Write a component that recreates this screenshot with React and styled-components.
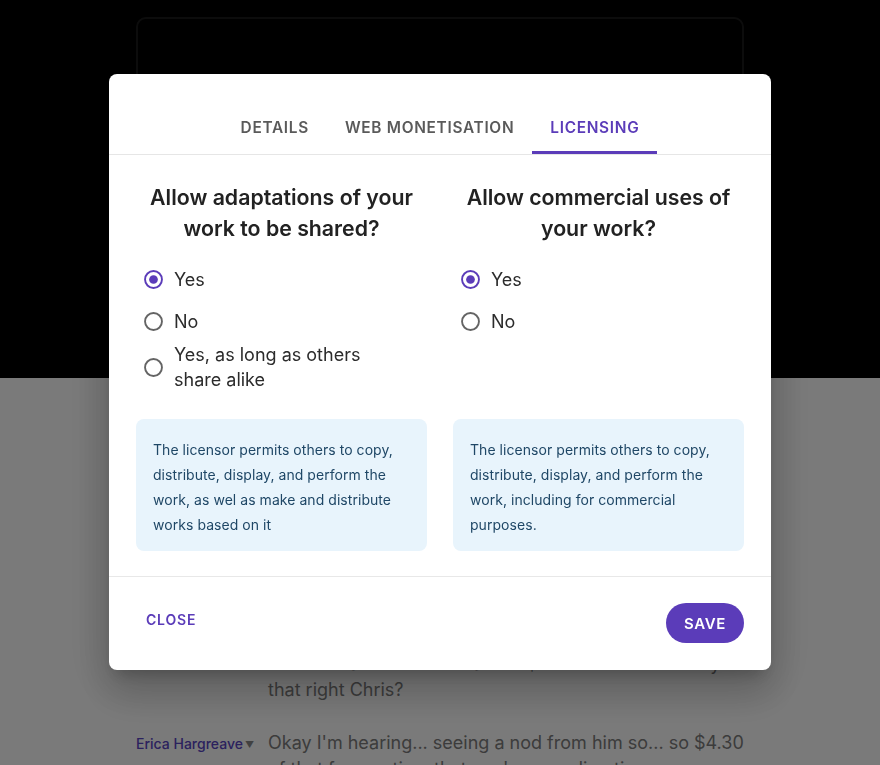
import React, { useState } from 'react'
import styled, { createGlobalStyle } from 'styled-components'

const purple = '#5b3cb9'

const GlobalStyle = createGlobalStyle`
  html, body {
    margin: 0;
    padding: 0;
    background: #fff;
    font-family: Inter, 'Noto Sans', sans-serif;
    overflow: hidden;
  }
`

const Page = styled.div`
  width: 880px;
  height: 765px;
  overflow: hidden;
`

const Hero = styled.div`
  height: 378px;
  background: #000;
  padding: 17px 136px 0;
  box-sizing: border-box;
`

const PlayerCard = styled.div`
  height: 400px;
  border: 2px solid #1b1b1b;
  border-radius: 10px;
`

const Transcript = styled.div`
  padding: 273px 136px 0;
  display: flex;
  flex-direction: column;
  gap: 27px;
`

const Entry = styled.div`
  display: grid;
  grid-template-columns: 132px 1fr;
`

const Speaker = styled.div`
  font-size: 14px;
  font-weight: 500;
  color: #5a46c4;
  padding-top: 5px;
  display: flex;
  align-items: flex-start;
  gap: 2px;
  white-space: nowrap;
`

const Caret = styled.span`
  font-size: 9px;
  color: #888;
  margin-top: 4px;
`

const Words = styled.p`
  margin: 0;
  font-size: 18px;
  line-height: 26px;
  color: #7d7d7d;
`

const Backdrop = styled.div`
  position: fixed;
  inset: 0;
  background: rgba(0, 0, 0, 0.52);
  display: flex;
  justify-content: center;
  align-items: flex-start;
  padding-top: 74px;
`

const Dialog = styled.div`
  width: 662px;
  background: #fff;
  border-radius: 8px;
  box-shadow: 0 11px 15px -7px rgba(0, 0, 0, 0.2), 0 24px 38px 3px rgba(0, 0, 0, 0.14),
    0 9px 46px 8px rgba(0, 0, 0, 0.12);
  padding-top: 30px;
  overflow: hidden;
`

const TabBar = styled.div`
  display: flex;
  justify-content: center;
  border-bottom: 1px solid #e6e6e6;
`

const Tab = styled.button`
  height: 50px;
  padding: 1px 18px 1px;
  border: none;
  background: none;
  border-bottom: 3px solid ${({ $active }) => ($active ? purple : 'transparent')};
  font-family: inherit;
  font-size: 15.4px;
  font-weight: 600;
  letter-spacing: 0.7px;
  text-transform: uppercase;
  color: ${({ $active }) => ($active ? purple : '#5a5a5a')};
  cursor: pointer;
`

const Body = styled.div`
  display: grid;
  grid-template-columns: 1fr 1fr;
  column-gap: 26px;
  row-gap: 27px;
  padding: 27px 27px 25px;
  border-bottom: 1px solid #e8e8e8;
`

const Question = styled.div`
  display: flex;
  flex-direction: column;
`

const Heading = styled.h2`
  margin: 0 0 14px;
  font-size: 21.3px;
  line-height: 31px;
  font-weight: 600;
  color: #222;
  text-align: center;
`

const Option = styled.label`
  min-height: 42px;
  display: flex;
  align-items: center;
  gap: 11px;
  padding-left: 8px;
  cursor: pointer;
`

const Label = styled.span`
  font-size: 18px;
  line-height: 25px;
  color: #2b2b2b;
  max-width: 215px;
`

const Info = styled.div`
  background: #e8f4fc;
  border-radius: 8px;
  padding: 18px 17px 14px;
  font-size: 14px;
  line-height: 25px;
  letter-spacing: 0.05px;
  color: #1f4766;
`

const Footer = styled.div`
  display: flex;
  justify-content: space-between;
  align-items: center;
  padding: 26px 27px 27px;
`

const TextButton = styled.button`
  border: none;
  background: none;
  padding: 4px 10px 12px;
  font-family: inherit;
  font-size: 14px;
  font-weight: 600;
  letter-spacing: 0.8px;
  color: ${purple};
  cursor: pointer;
`

const PillButton = styled.button`
  height: 40px;
  width: 78px;
  border: none;
  border-radius: 20px;
  background: ${purple};
  color: #fff;
  font-family: inherit;
  font-size: 15px;
  font-weight: 600;
  letter-spacing: 0.6px;
  cursor: pointer;
`

function RadioIcon({ checked }) {
  return (
    <svg width="19" height="19" viewBox="0 0 20 20" style={{ flexShrink: 0 }}>
      <circle cx="10" cy="10" r="8.9" fill="none" stroke={checked ? purple : '#646464'} strokeWidth="2" />
      {checked && <circle cx="10" cy="10" r="4.6" fill={purple} />}
    </svg>
  )
}

function RadioGroup({ options, value, onChange }) {
  return options.map((opt) => (
    <Option key={opt} onClick={() => onChange(opt)}>
      <RadioIcon checked={value === opt} />
      <Label>{opt}</Label>
    </Option>
  ))
}

export default function App() {
  const [adapt, setAdapt] = useState('Yes')
  const [commercial, setCommercial] = useState('Yes')

  return (
    <Page>
      <GlobalStyle />
      <Hero>
        <PlayerCard />
      </Hero>
      <Transcript>
        <Entry>
          <div />
          <Words>
            from Joe and I think it's about $ five come out someyis
            <br />
            that right Chris?
          </Words>
        </Entry>
        <Entry>
          <Speaker>
            Erica Hargreave<Caret>▼</Caret>
          </Speaker>
          <Words>
            Okay I'm hearing... seeing a nod from him so... so $4.30
            <br />
            of that for any time that you're spending time on
          </Words>
        </Entry>
      </Transcript>

      <Backdrop>
        <Dialog>
          <TabBar>
            <Tab>Details</Tab>
            <Tab>Web Monetisation</Tab>
            <Tab $active>Licensing</Tab>
          </TabBar>
          <Body>
            <Question>
              <Heading>Allow adaptations of your work to be shared?</Heading>
              <RadioGroup
                options={['Yes', 'No', 'Yes, as long as others share alike']}
                value={adapt}
                onChange={setAdapt}
              />
            </Question>
            <Question>
              <Heading>Allow commercial uses of your work?</Heading>
              <RadioGroup options={['Yes', 'No']} value={commercial} onChange={setCommercial} />
            </Question>
            <Info>
              The licensor permits others to copy, distribute, display, and perform the work, as wel as make and
              distribute works based on it
            </Info>
            <Info>
              The licensor permits others to copy, distribute, display, and perform the work, including for commercial
              purposes.
            </Info>
          </Body>
          <Footer>
            <TextButton>CLOSE</TextButton>
            <PillButton>SAVE</PillButton>
          </Footer>
        </Dialog>
      </Backdrop>
    </Page>
  )
}
